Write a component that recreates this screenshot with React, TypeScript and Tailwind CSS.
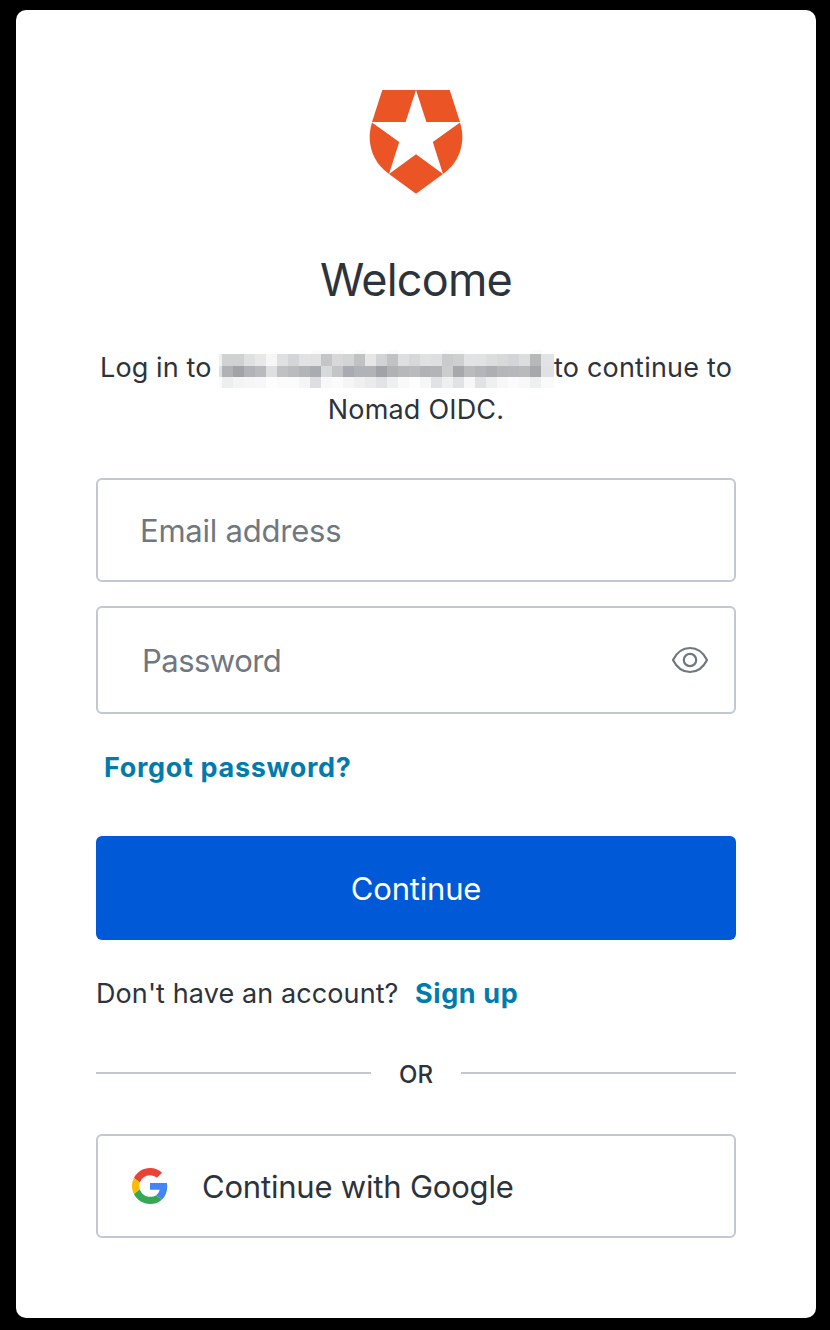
const mosaicRows: string[][] = [
  "cfd1d3 cfd1d3 dfe0e2 e8e8e8 f6f6f6 dfe0e2 d3d5d8 e1e2e3 dfe1e2 c4c5c7 d8d8da d2d4d5 c0c2c4 e6e6e6 d1d3d5 c0c2c4 dddfe1 d6d8da dfe1e2 dddfe0 c9cbcd cecfd1 e2e3e4 e1e2e3 dcdddf d8d9db d4d5d8 dcdddf b7b8ba e2e3e5".split(" "),
  "b0b2b5 a2a3a7 b1b3b6 b8babd dddfe1 bfc1c3 babbbd b1b5b8 a9acb0 d8d9db c2c4c6 a9abb0 b0b4b7 b1b3b6 a2a3a7 b0b2b4 b7b8ba babbbd b0b2b6 b2b4b6 cccdce a7a8ac b9bbbd b4b5b8 adafb3 b4b6b8 b7b8bb b8babc a7a8ac e0e1e3".split(" "),
  "eceef0 f3f5f5 f6f6f6 f7f7f7 fdfdfd fbfbfb fafcfb f5f5f5 dddee1 f8f8f8 fbfbfb f5f5f5 f0f0f0 ebebec e1e3e6 eef0f0 f9f9f9 fdfdfd f5f6f6 e1e2e5 eef0ef e1e2e5 f7f7f7 e1e2e5 eef0f0 f7f7f7 fbfbfb f8f8f8 eef0f0 f9fafa".split(" "),
];
const edgeColors = ["f0f0f1", "dfe0e2", "fbfbfb"];
const faintCells = [8, 9, 10, 12, 15, 20, 21, 28];

function RedactedName() {
  return (
    <span className="mt-1 flex h-[38px] w-[335px] shrink-0 flex-col" aria-hidden="true">
      <span className="flex h-1 pl-[3px]">
        {mosaicRows[0].map((_, i) => (
          <span key={i} className={faintCells.includes(i) ? "flex-1 bg-[#fafbfb]" : "flex-1"} />
        ))}
      </span>
      {mosaicRows.map((row, r) => (
        <span key={r} className={r === 0 ? "flex h-3" : "flex h-[11px]"}>
          <span className="w-[3px]" style={{ backgroundColor: "#" + edgeColors[r] }} />
          <span className="grid flex-1 grid-cols-[repeat(29,11px)_1fr]">
            {row.map((color, i) => (
              <span key={i} style={{ backgroundColor: "#" + color }} />
            ))}
          </span>
        </span>
      ))}
    </span>
  );
}

function Logo() {
  return (
    <svg className="block h-[104px] w-[94px]" viewBox="369 90 94 104" fill="#eb5424">
      <path d="M382.3 90H416L405.6 122H372Z" />
      <path d="M416 90H449.7L460 122H426.4Z" />
      <path d="M372 122.5L399.2 142L389 174C373 163 365.5 143 372 122.5Z" />
      <path d="M460 122.5L432.8 142L443 174C459 163 466.5 143 460 122.5Z" />
      <path d="M416 154.3L443 174L416 193.7L389 174Z" />
    </svg>
  );
}

function EyeIcon() {
  return (
    <svg className="h-7 w-[38px]" viewBox="0 0 38 28" fill="none" stroke="#6f7780" strokeWidth="2.2">
      <path d="M2 14C6 6 12 2 19 2C26 2 32 6 36 14C32 22 26 26 19 26C12 26 6 22 2 14Z" strokeLinejoin="round" />
      <circle cx="19" cy="14" r="6.2" />
    </svg>
  );
}

function GoogleIcon() {
  return (
    <svg className="h-9 w-9" viewBox="0 0 48 48">
      <path fill="#EA4335" d="M24 9.5c3.54 0 6.71 1.22 9.21 3.6l6.85-6.85C35.9 2.38 30.47 0 24 0 14.62 0 6.51 5.38 2.56 13.22l7.98 6.19C12.43 13.72 17.74 9.5 24 9.5z" />
      <path fill="#4285F4" d="M46.98 24.55c0-1.57-.15-3.09-.38-4.55H24v9.02h12.94c-.58 2.96-2.26 5.48-4.78 7.18l7.73 6c4.51-4.18 7.09-10.36 7.09-17.65z" />
      <path fill="#FBBC05" d="M10.53 28.59c-.48-1.45-.76-2.99-.76-4.59s.27-3.14.76-4.59l-7.98-6.19C.92 16.46 0 20.12 0 24c0 3.88.92 7.54 2.56 10.78l7.97-6.19z" />
      <path fill="#34A853" d="M24 48c6.48 0 11.93-2.13 15.89-5.81l-7.73-6c-2.15 1.45-4.92 2.3-8.16 2.3-6.26 0-11.57-4.22-13.47-9.91l-7.98 6.19C6.51 42.62 14.62 48 24 48z" />
    </svg>
  );
}

export default function App() {
  return (
    <div className="h-[1330px] w-[830px] bg-black pt-[10px] pl-4 font-['Inter',sans-serif] text-[#2d333a]">
      <main className="flex h-[1308px] w-[800px] flex-col rounded-[10px] bg-white px-20 pt-20">
        <div className="flex justify-center">
          <Logo />
        </div>
        <h1 className="mt-[57px] text-center text-[45px] leading-[58px] tracking-[-0.8px]">Welcome</h1>

        <div className="mt-[37px] text-[27px] leading-[42px] tracking-[0.2px]">
          <div className="flex h-[42px] items-center pl-1">
            <span className="w-[119px] pt-px tracking-[0.12px] whitespace-nowrap">Log in to</span>
            <RedactedName />
            <span className="pt-px whitespace-nowrap">to continue to</span>
          </div>
          <div className="pt-px text-center">Nomad OIDC.</div>
        </div>

        <div className="mt-[47px] flex h-[104px] shrink-0 items-center rounded-[6px] border-2 border-[#c2c8d0] px-[42px] pt-[3px] text-[31px] tracking-[-0.22px] text-[#6f7780]">
          Email address
        </div>
        <div className="mt-6 flex h-[108px] shrink-0 items-center justify-between rounded-[6px] border-2 border-[#c2c8d0] pr-[25px] pl-11 text-[31px] tracking-[-0.52px] text-[#6f7780]">
          <span className="pt-[3px]">Password</span>
          <EyeIcon />
        </div>

        <a className="mt-[33px] ml-2 self-start text-[27px] leading-[42px] font-bold tracking-[0.68px] text-[#007bad]">Forgot password?</a>

        <button className="mt-[47px] h-[104px] shrink-0 rounded-[6px] bg-[#0059d6] pt-[3px] text-[31px] tracking-[-0.2px] text-white">Continue</button>

        <div className="mt-[33px] flex text-[27px] leading-[42px] tracking-[0.1px]">
          <span className="w-[319px] whitespace-nowrap">Don't have an account?</span>
          <a className="font-bold tracking-[0.6px] text-[#007bad]">Sign up</a>
        </div>

        <div className="mt-[39px] flex h-[38px] items-center">
          <span className="h-[2px] w-[275px] bg-[#c2c8d0]" />
          <span className="flex-1 pt-1 text-center text-[24px] leading-8 font-[450]">OR</span>
          <span className="h-[2px] w-[275px] bg-[#c2c8d0]" />
        </div>

        <button className="mt-[42px] flex h-[104px] shrink-0 items-center rounded-[6px] border-2 border-[#c2c8d0] pl-[34px] text-[31px] tracking-[-0.2px]">
          <GoogleIcon />
          <span className="ml-[34px] pt-[3px]">Continue with Google</span>
        </button>
      </main>
    </div>
  );
}
